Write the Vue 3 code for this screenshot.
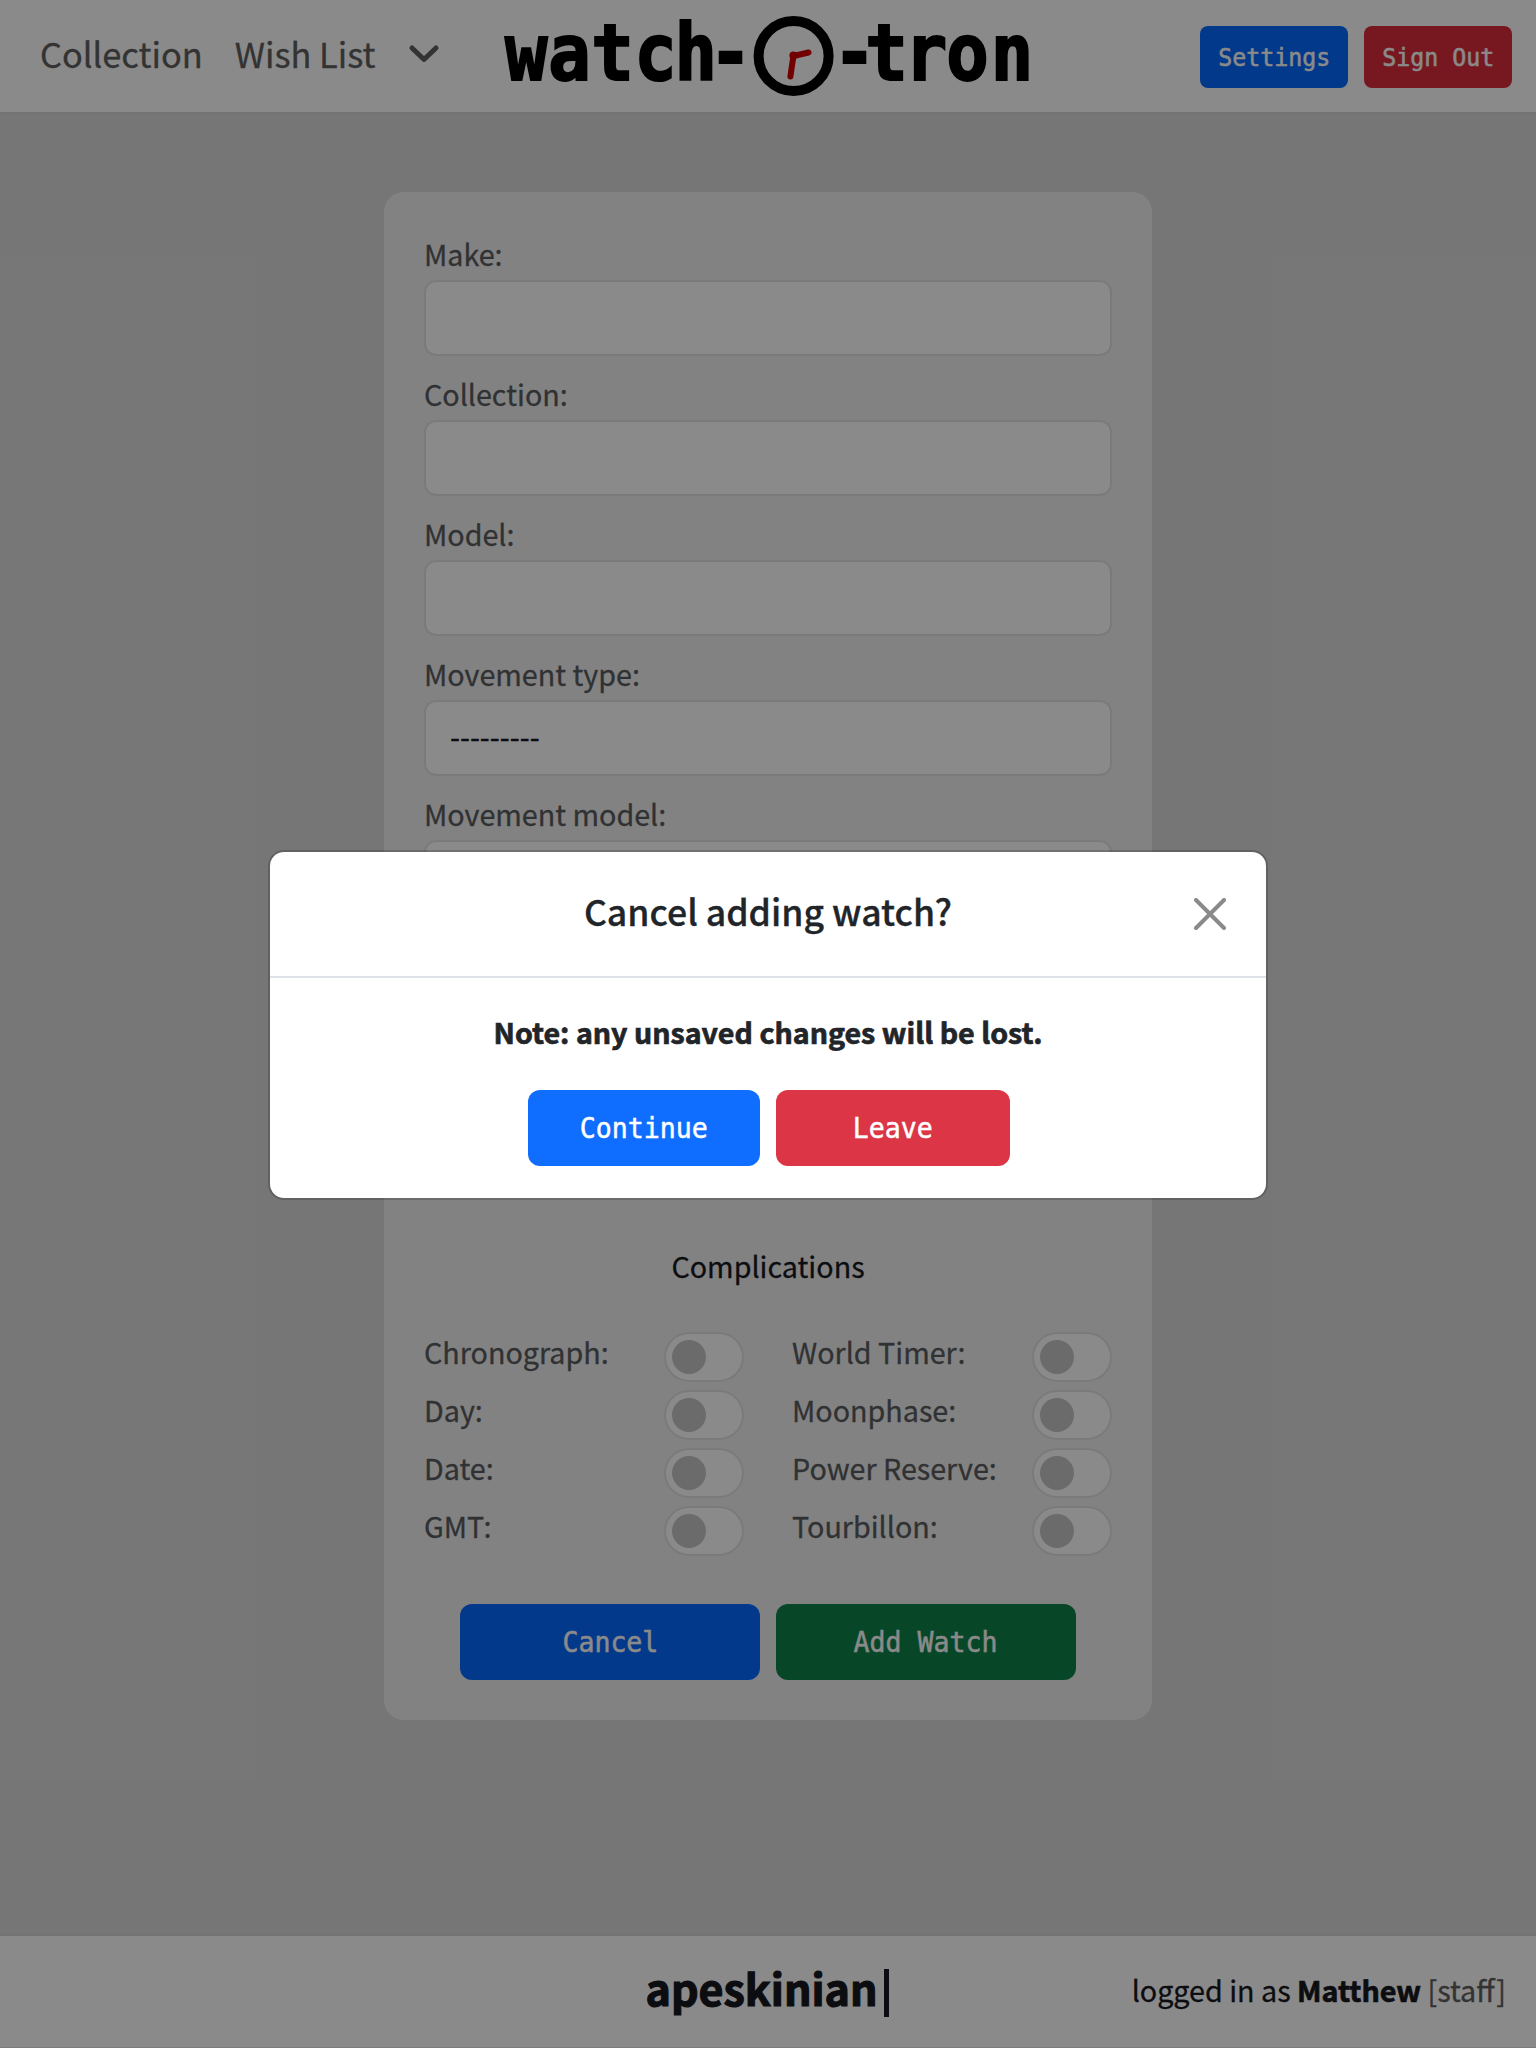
<script setup>
const fields = [
  { label: 'Make:', value: '' },
  { label: 'Collection:', value: '' },
  { label: 'Model:', value: '' },
  { label: 'Movement type:', value: '---------' },
  { label: 'Movement model:', value: '' }
]
const complications = [
  'Chronograph:', 'World Timer:',
  'Day:', 'Moonphase:',
  'Date:', 'Power Reserve:',
  'GMT:', 'Tourbillon:'
]
</script>

<template>
  <div class="page">
    <header class="topbar">
      <nav class="nav">
        <a class="link">Collection</a>
        <a class="link wish">Wish List</a>
        <svg class="chevron" width="32" height="24" viewBox="0 0 32 24">
          <path d="M4 6 L16 17.5 L28 6" fill="none" stroke="#5e5e5e" stroke-width="5" stroke-linecap="round" stroke-linejoin="round" />
        </svg>
      </nav>
      <svg class="logo" width="532" height="110" viewBox="0 0 532 110">
        <g class="wordmark" transform="scale(.905 1)">
          <text y="80" x="3.4 51 98.5 146 190.5 229">watch-</text>
          <text y="80" x="366 401.5 445 491 540">-tron</text>
        </g>
        <circle cx="291.6" cy="56" r="35" fill="none" stroke="#000" stroke-width="10" />
        <path d="M306.5 52.5 L291.4 56 L288.4 76.5" fill="none" stroke="#d40000" stroke-width="6" stroke-linecap="round" />
        <circle cx="291.4" cy="55.5" r="4" fill="#d40000" />
      </svg>
      <div class="account">
        <button class="btn small blue"><span>Settings</span></button>
        <button class="btn small red"><span>Sign Out</span></button>
      </div>
    </header>

    <main class="main">
      <form class="card">
        <div v-for="f in fields" :key="f.label" class="field">
          <label class="label">{{ f.label }}</label>
          <div class="input">{{ f.value }}</div>
        </div>
        <h2 class="heading">Complications</h2>
        <div class="toggles">
          <div v-for="c in complications" :key="c" class="toggle-row">
            <label class="label">{{ c }}</label>
            <span class="switch"><span class="knob"></span></span>
          </div>
        </div>
        <div class="actions">
          <button type="button" class="btn blue"><span>Cancel</span></button>
          <button type="button" class="btn green"><span>Add Watch</span></button>
        </div>
      </form>
    </main>

    <footer class="footer">
      <div class="brand">apeskinian<span class="cursor"></span></div>
      <div class="user">logged in as <b>Matthew</b> <span class="role">[staff]</span></div>
    </footer>

    <div class="backdrop">
      <section class="modal">
        <div class="modal-head">
          <h1 class="title">Cancel adding watch?</h1>
          <svg class="close" width="32" height="32" viewBox="0 0 32 32">
            <path d="M2 2 L30 30 M30 2 L2 30" stroke="#8a8a8a" stroke-width="4" stroke-linecap="round" />
          </svg>
        </div>
        <div class="modal-body">
          <p class="note">Note: any unsaved changes will be lost.</p>
          <div class="modal-actions">
            <button class="btn continue"><span>Continue</span></button>
            <button class="btn leave"><span>Leave</span></button>
          </div>
        </div>
      </section>
    </div>
  </div>
</template>

<style>
body { background: #767676; }
</style>

<style scoped>
* { box-sizing: border-box; }
.page {
  position: relative;
  width: 1536px;
  height: 2048px;
  overflow: hidden;
  display: flex;
  flex-direction: column;
  background: #dbdbdb;
  color: #17191f;
  font-family: "Noto Sans CJK SC", sans-serif;
  font-size: 28.7px;
  -webkit-text-stroke: .3px;
}
.topbar {
  height: 114px;
  flex: none;
  display: grid;
  grid-template-columns: 502px 532px 502px;
  background: #fff;
  border-bottom: 2px solid #d4d4d4;
}
.nav { display: flex; align-items: center; padding-left: 40px; height: 108px; color: #5e5e5e; }
.link { font-size: 34.4px; line-height: 50px; white-space: nowrap; margin-top: -2px; }
.wish { margin-left: 32px; }
.chevron { margin-left: 32px; }
.logo { display: block; }
.wordmark { font: bold 78px "DejaVu Sans Mono", monospace; fill: #000; stroke: #000; stroke-width: 2px; -webkit-text-stroke: 2px #000; }
.account { display: flex; justify-content: flex-end; gap: 16px; padding: 26px 24px 0 0; }
.btn {
  border: 0;
  height: 76px;
  width: 300px;
  padding: 0;
  border-radius: 12px;
  color: #fff;
  font: 29px/76px "DejaVu Sans Mono", monospace;
  -webkit-text-stroke: .5px;
}
.btn span { display: inline-block; transform: scaleX(.916); white-space: pre; }
.small { width: 148px; height: 62px; border-radius: 8px; font-size: 25.4px; line-height: 62px; }
.blue { background: #066aff; }
.red { background: #dd2d3c; }
.green { background: #0f824b; }
.main { flex: 1; display: flex; justify-content: center; align-items: flex-start; padding-top: 78px; }
.card {
  width: 768px;
  height: 1528px;
  padding: 40px;
  border-radius: 20px;
  background: #f1f1f1;
}
.field { margin-bottom: 16px; }
.label { display: block; height: 48px; line-height: 43px; color: #5a5c5e; white-space: nowrap; }
.input {
  height: 76px;
  padding-left: 24px;
  border: 2px solid #e2e2e8;
  border-radius: 12px;
  background: #fff;
  line-height: 68px;
}
.heading { margin: 312px 0 0; height: 86px; line-height: 43px; font-size: inherit; font-weight: 400; text-align: center; }
.card .heading { margin-top: 328px; }
.toggles { display: grid; grid-template-columns: 320px 320px; column-gap: 48px; }
.toggle-row { display: flex; justify-content: space-between; height: 58px; }
.switch {
  width: 80px;
  height: 50px;
  margin-top: 2px;
  padding: 6px;
  border: 2px solid #e2e2e8;
  border-radius: 25px;
  background: #fff;
}
.knob { display: block; width: 34px; height: 34px; border-radius: 50%; background: #c6c6c6; }
.actions { display: flex; justify-content: center; gap: 16px; margin-top: 42px; }
.footer {
  flex: none;
  height: 114px;
  display: grid;
  grid-template-columns: 1fr auto 1fr;
  background: #fff;
  border-top: 2px solid #d4d4d4;
  border-bottom: 1px solid #e6e6e6;
}
.brand { grid-column: 2; display: flex; margin-right: 2px; font-size: 43px; font-weight: 700; line-height: 103px; -webkit-text-stroke: 1.2px; }
.cursor { width: 5px; height: 48px; margin: 33px 0 0 6px; background: #17191f; }
.user { text-align: right; padding-right: 30px; line-height: 108px; white-space: nowrap; }
.user b, .note { -webkit-text-stroke: .7px; }
.role { color: #5e5e5e; }
.backdrop {
  position: absolute;
  inset: 0;
  display: flex;
  justify-content: center;
  align-items: flex-start;
  padding-top: 850px;
  background: rgba(0, 0, 0, .46);
}
.modal {
  width: 1000px;
  height: 350px;
  border: 2px solid rgba(0, 0, 0, .175);
  border-radius: 16px;
  background: #fff;
  background-clip: padding-box;
  color: #212529;
}
.modal-head {
  display: grid;
  grid-template-columns: 80px 1fr 80px;
  align-items: center;
  height: 126px;
  border-bottom: 2px solid #dee2e6;
}
.title { grid-column: 2; margin: 0; font-size: 35.6px; font-weight: 500; line-height: 52px; text-align: center; transform: translateY(-3px); }
.close { margin-left: 8px; }
.modal-body { padding: 32px; text-align: center; }
.note { margin: 0; height: 80px; line-height: 43px; font-weight: 700; font-size: 28.6px; }
.modal-actions { display: flex; justify-content: center; gap: 16px; padding-left: 2px; }
.continue { width: 232px; background: #0f6dff; }
.leave { width: 234px; background: #dc3545; }
</style>
